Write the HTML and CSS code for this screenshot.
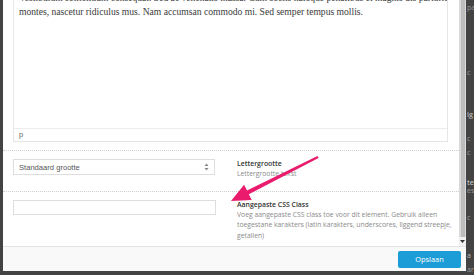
FILE: index.html
```html
<!DOCTYPE html>
<html>
<head>
<meta charset="utf-8">
<link rel="stylesheet" href="styles.css">
</head>
<body>
<div class="screen">
  <div class="modal">
    <div class="modal-body">
      <div class="content">
        <div class="editor">
          <div class="editor-text">Vestibulum sollicitudin consequat. Sed ac venenatis massa. Cum sociis natoque penatibus et magnis dis parturient<br>montes, nascetur ridiculus mus. Nam accumsan commodo mi. Sed semper tempus mollis.</div>
          <div class="statusbar">p</div>
        </div>
        <div class="row row-size">
          <div class="field select">
            <span>Standaard grootte</span>
            <svg class="updown" width="5" height="8" viewBox="0 0 5 8"><path d="M2.5 0.5 L4.5 3 L0.5 3 Z M2.5 7.5 L4.5 5 L0.5 5 Z" fill="#888"/></svg>
          </div>
          <div class="info">
            <div class="heading">Lettergrootte</div>
            <div class="desc">Lettergrootte tekst</div>
          </div>
        </div>
        <div class="row row-class">
          <div class="field input"></div>
          <div class="info">
            <div class="heading">Aangepaste CSS Class</div>
            <div class="desc">Voeg aangepaste CSS class toe voor dit element. Gebruik alleen<br>toegestane karakters (latin karakters, underscores, liggend streepje,<br>getallen)</div>
          </div>
        </div>
      </div>
      <div class="scroll">
        <div class="thumb"></div>
        <div class="scroll-btn"><svg width="5" height="3" viewBox="0 0 5 3"><path d="M0 0 L5 0 L2.5 3 Z" fill="#333"/></svg></div>
      </div>
    </div>
    <div class="footer">
      <div class="btn">Opslaan</div>
    </div>
  </div>
  <div class="bg-right">
    <div class="frag f1">pa</div>
    <div class="frag f2">c</div>
    <div class="frag f3">ig</div>
    <div class="frag f4">c</div>
    <div class="frag f5">c</div>
    <div class="frag f6">te</div>
    <div class="frag f7">es</div>
    <div class="frag f8">c</div>
    <div class="frag f9">a</div>
    <div class="frag f10">ar</div>
  </div>
</div>
<svg class="arrow" width="100" height="60" viewBox="0 0 100 60">
  <path d="M6 51 L19.1 34.8 L22 40.6 L92.5 6.1 L93.5 7.9 L23.8 44.2 L26.7 50 Z" fill="#ea1a6c"/>
</svg>
</body>
</html>
```

FILE: styles.css
```css
html, body {
  margin: 0;
  padding: 0;
}
body {
  width: 474px;
  height: 275px;
  overflow: hidden;
  background: #434343;
  position: relative;
  font-family: "Open Sans", "Liberation Sans", sans-serif;
}
.screen {
  display: flex;
  height: 275px;
  padding-left: 3px;
  box-sizing: border-box;
}
.modal {
  width: 463px;
  height: 271px;
  display: flex;
  flex-direction: column;
  background: #fff;
}
.modal-body {
  display: flex;
  height: 246px;
  overflow: hidden;
}
.content {
  width: 456px;
  overflow: hidden;
}
.editor {
  margin: -9px 11px 0 10px;
  border-left: 1px solid #e6e6e6;
  border-right: 1px solid #e6e6e6;
}
.editor-text {
  height: 137px;
  box-sizing: border-box;
  padding: 0 5px;
  font-family: "Liberation Serif", "DejaVu Serif", serif;
  font-size: 9.6px;
  line-height: 14px;
  color: #3a3a3a;
  white-space: nowrap;
  overflow: hidden;
}
.statusbar {
  height: 14px;
  box-sizing: border-box;
  border-top: 1px solid #ececec;
  border-bottom: 1px solid #e4e4e4;
  padding-left: 5px;
  font-family: "Liberation Sans", Arial, sans-serif;
  font-size: 7.5px;
  line-height: 12px;
  color: #666;
}
.row {
  border-top: 1px dotted #cdcdcd;
  display: flex;
  align-items: flex-start;
  padding-top: 8px;
  box-sizing: border-box;
}
.row-size {
  margin-top: 8px;
  height: 41px;
}
.row-class {
  height: 55px;
}
.field {
  width: 203px;
  margin-left: 10px;
  box-sizing: border-box;
  border: 1px solid #dedede;
  background: #fff;
}
.select {
  width: 202px;
  height: 16px;
  display: flex;
  align-items: center;
  justify-content: space-between;
  padding: 0 5px 0 5px;
  font-family: "Liberation Sans", Arial, sans-serif;
  font-size: 7.6px;
  color: #555;
}
.updown {
  display: block;
}
.input {
  height: 15px;
}
.info {
  margin-left: 21px;
}
.select + .info {
  margin-left: 22px;
}
.heading {
  font-size: 6.9px;
  font-weight: 600;
  line-height: 10px;
  color: #333;
  white-space: nowrap;
}
.desc {
  font-size: 6.8px;
  line-height: 10.4px;
  color: #8a8a8a;
  white-space: nowrap;
}
.scroll {
  width: 7px;
  display: flex;
  flex-direction: column;
  background: #dadada;
}
.thumb {
  flex: 1;
  margin-left: 2px;
  margin-right: 1px;
  background: #bdbdbd;
}
.scroll-btn {
  height: 9px;
  background: #f1f1f1;
  display: flex;
  align-items: center;
  justify-content: center;
}
.scroll-btn svg {
  display: block;
}
.footer {
  height: 25px;
  box-sizing: border-box;
  border-top: 1px solid #e3e3e3;
  background: #f9f9f9;
  display: flex;
  justify-content: flex-end;
  align-items: flex-start;
  padding: 4px 5px 0 0;
}
.btn {
  width: 63px;
  height: 17px;
  background: #1d9dd8;
  border-radius: 2px;
  color: #fff;
  font-size: 7.4px;
  line-height: 17px;
  text-align: center;
}
.bg-right {
  flex: 1;
  overflow: hidden;
  display: flex;
  flex-direction: column;
  color: #9a9a9a;
  font-size: 7px;
  line-height: 8px;
  padding-left: 1px;
}
.frag {
  white-space: nowrap;
}
.f1 { margin-top: 4px; }
.f2 { margin-top: 57px; }
.f3 { margin-top: 34px; color: #bbb; font-weight: 600; }
.f4 { margin-top: 16px; }
.f5 { margin-top: 6px; }
.f6 { margin-top: 22px; color: #bbb; font-weight: 600; }
.f7 { margin-top: 0; }
.f8 { margin-top: 19px; }
.f9 { margin-top: 30px; color: #bbb; }
.f10 { margin-top: 6px; }
.arrow {
  position: absolute;
  left: 225px;
  top: 150px;
}
```
